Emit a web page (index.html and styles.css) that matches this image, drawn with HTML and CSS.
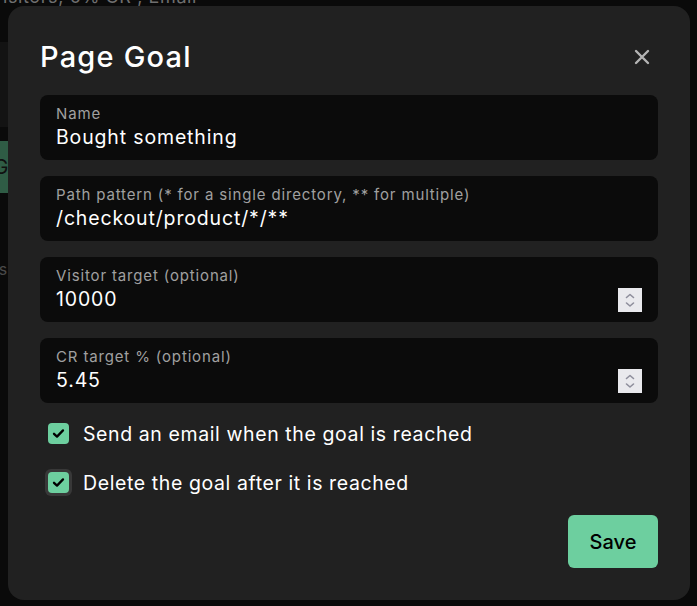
FILE: index.html
```html
<!DOCTYPE html>
<html lang="en">
<head>
<meta charset="utf-8">
<title>Page Goal</title>
<link rel="stylesheet" href="styles.css">
</head>
<body>
<div class="page">
  <p class="meta">Visitors, 0% CR , Email</p>
  <div class="panel">
    <h3 class="panel-title">Most visited</h3>
    <p class="panel-sub">conversion</p>
  </div>
  <button class="bg-btn" type="button">Goal</button>
  <p class="bg-note">Settings</p>
</div>

<div class="overlay">
  <div class="modal" role="dialog" aria-labelledby="goal-title">
    <div class="modal-head">
      <h2 id="goal-title" class="modal-title">Page Goal</h2>
      <button class="close" type="button" aria-label="Close">
        <svg width="16" height="16" viewBox="0 0 16 16"><path d="M2 2L14 14M14 2L2 14" stroke="#b4b4b4" stroke-width="2.4" stroke-linecap="round"/></svg>
      </button>
    </div>

    <div class="fields">
      <label class="field">
        <span class="field-label">Name</span>
        <span class="field-row"><span class="field-value">Bought something</span></span>
      </label>
      <label class="field">
        <span class="field-label">Path pattern (* for a single directory, ** for multiple)</span>
        <span class="field-row"><span class="field-value">/checkout/product/*/**</span></span>
      </label>
      <label class="field">
        <span class="field-label">Visitor target (optional)</span>
        <span class="field-row"><span class="field-value">10000</span>
          <span class="spin"><svg width="24" height="24" viewBox="0 0 24 24"><path d="M8.5 9.5L12 6.5L15.5 9.5M8.5 15L12 18L15.5 15" fill="none" stroke="#8e8e9c" stroke-width="1.6" stroke-linecap="round" stroke-linejoin="round"/></svg></span>
        </span>
      </label>
      <label class="field">
        <span class="field-label">CR target % (optional)</span>
        <span class="field-row"><span class="field-value">5.45</span>
          <span class="spin"><svg width="24" height="24" viewBox="0 0 24 24"><path d="M8.5 9.5L12 6.5L15.5 9.5M8.5 15L12 18L15.5 15" fill="none" stroke="#8e8e9c" stroke-width="1.6" stroke-linecap="round" stroke-linejoin="round"/></svg></span>
        </span>
      </label>
    </div>

    <div class="checks">
      <div class="check">
        <span class="box-wrap"><span class="box"><svg width="21" height="21" viewBox="0 0 21 21"><path d="M6 10.8L9 13.6L15 7.4" fill="none" stroke="#000" stroke-width="2.3" stroke-linecap="round" stroke-linejoin="round"/></svg></span></span>
        <span class="check-text">Send an email when the goal is reached</span>
      </div>
      <div class="check">
        <span class="box-wrap focus"><span class="box"><svg width="21" height="21" viewBox="0 0 21 21"><path d="M6 10.8L9 13.6L15 7.4" fill="none" stroke="#000" stroke-width="2.3" stroke-linecap="round" stroke-linejoin="round"/></svg></span></span>
        <span class="check-text">Delete the goal after it is reached</span>
      </div>
    </div>

    <div class="actions">
      <button class="save" type="button">Save</button>
    </div>
  </div>
</div>
</body>
</html>
```

FILE: styles.css
```css
html, body {
  margin: 0;
  padding: 0;
}
body {
  width: 697px;
  height: 606px;
  overflow: hidden;
  background: #0a0a0a;
  font-family: Inter, "Liberation Sans", sans-serif;
  position: relative;
}

.page {
  margin-left: -24px;
  display: flex;
  flex-direction: column;
  align-items: flex-start;
}
.meta {
  margin: -14px 0 0 14px;
  color: #6f6f6f;
  font-size: 18px;
  line-height: 22px;
  letter-spacing: 0.6px;
}
.panel {
  margin-top: 34px;
  background: #131313;
  width: 300px;
  padding: 8px 0 20px 0;
}
.panel-title {
  margin: 0;
  color: #a4a4a4;
  font-size: 24px;
  line-height: 28px;
  font-weight: 500;
  text-indent: -120px;
}
.panel-sub {
  margin: 8px 0 0 0;
  color: #555;
  font-size: 18px;
  text-indent: -80px;
}
.bg-btn {
  margin-top: 14px;
  height: 52px;
  width: 90px;
  border: 0;
  background: #2f5c45;
  color: #101010;
  font-size: 20px;
  font-family: inherit;
  padding-left: 0;
  text-indent: -6px;
}
.bg-note {
  margin: 66px 0 0 0;
  color: #4a4a4a;
  font-size: 16px;
  text-indent: -30px;
}

/* overlay + modal */
.overlay {
  position: absolute;
  inset: 0;
}
.modal {
  position: absolute;
  left: 8px;
  top: 6px;
  width: 682px;
  height: 594px;
  box-sizing: border-box;
  background: #212121;
  border-radius: 16px;
  padding: 32px 32px 32px 32px;
  display: flex;
  flex-direction: column;
}
.modal-head {
  display: flex;
  align-items: center;
  justify-content: space-between;
  height: 38px;
}
.modal-title {
  margin: 0;
  color: #ffffff;
  font-size: 29px;
  font-weight: 500;
  line-height: 38px;
  letter-spacing: 1.2px;
}
.close {
  border: 0;
  background: none;
  padding: 0;
  width: 16px;
  height: 16px;
  margin-right: 8px;
  display: flex;
}

.fields {
  margin-top: 19px;
  display: flex;
  flex-direction: column;
  gap: 16px;
}
.field {
  display: flex;
  flex-direction: column;
  background: #0b0b0b;
  border-radius: 8px;
  height: 65px;
  box-sizing: border-box;
  padding: 9px 16px 0 16px;
}
.field-label {
  color: #a0a0a0;
  font-size: 15px;
  line-height: 20px;
  letter-spacing: 0.85px;
}
.field-row {
  display: flex;
  align-items: center;
  justify-content: space-between;
  height: 27px;
}
.field-value {
  color: #ffffff;
  font-size: 19.5px;
  line-height: 27px;
  letter-spacing: 0.85px;
}
.spin {
  width: 24px;
  height: 24px;
  background: #e9e9ed;
  display: flex;
  margin-top: 1px;
}

.checks {
  margin-top: 17px;
  display: flex;
  flex-direction: column;
  gap: 22px;
  padding-left: 5px;
}
.check {
  display: flex;
  align-items: center;
  gap: 11px;
  height: 27px;
}
.box-wrap {
  width: 27px;
  height: 27px;
  border-radius: 6px;
  display: flex;
  align-items: center;
  justify-content: center;
}
.box-wrap.focus {
  background: #383838;
}
.box {
  width: 21px;
  height: 21px;
  border-radius: 4px;
  background: #6dcf9f;
  display: flex;
}
.check-text {
  color: #ffffff;
  font-size: 19.5px;
  line-height: 26px;
  letter-spacing: 0.6px;
}

.actions {
  margin-top: auto;
  display: flex;
  justify-content: flex-end;
}
.save {
  width: 90px;
  height: 53px;
  border: 0;
  border-radius: 6px;
  background: #6dcf9f;
  color: #000;
  font-family: Inter, "Liberation Sans", sans-serif;
  font-size: 20px;
  font-weight: 500;
}
```
